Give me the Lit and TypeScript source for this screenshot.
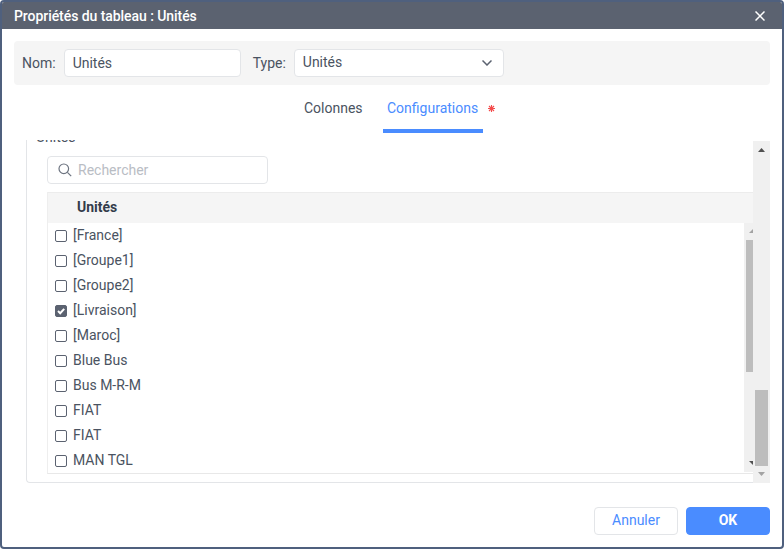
import { LitElement, html, css } from "lit";
import { customElement } from "lit/decorators.js";

const rows: { name: string; checked?: boolean }[] = [
  { name: "[France]" },
  { name: "[Groupe1]" },
  { name: "[Groupe2]" },
  { name: "[Livraison]", checked: true },
  { name: "[Maroc]" },
  { name: "Blue Bus" },
  { name: "Bus M-R-M" },
  { name: "FIAT" },
  { name: "FIAT" },
  { name: "MAN TGL" },
];

@customElement("app-root")
export class AppRoot extends LitElement {
  static styles = css`
    :host {
      display: block;
      width: 784px;
      height: 549px;
      font-family: Roboto, "Liberation Sans", sans-serif;
      font-size: 14px;
      color: #4a5361;
    }
    * { box-sizing: border-box; }
    .dialog {
      width: 784px;
      height: 549px;
      border: 2px solid #4f607e;
      border-radius: 4px;
      background: #fff;
      display: flex;
      flex-direction: column;
      overflow: hidden;
    }
    .title {
      height: 27px;
      flex: none;
      background: #5b6270;
      color: #fff;
      padding: 0 12px;
      display: flex;
      align-items: center;
      justify-content: space-between;
      font-weight: 500;
      letter-spacing: -0.06px;
    }
    .close { width: 10px; height: 10px; margin-right: 5px; margin-top: 1px; display: block; }
    .body {
      flex: 1;
      padding: 12px 12px 12px;
      display: flex;
      flex-direction: column;
      min-height: 0;
    }
    .band {
      height: 44px;
      flex: none;
      background: #f5f5f5;
      border-radius: 4px;
      padding: 8px;
      display: flex;
      align-items: center;
    }
    .band label { margin-right: 8px; }
    .band label.second { margin-left: 12px; }
    .field {
      height: 28px;
      background: #fff;
      border: 1px solid #e3e5e8;
      border-radius: 4px;
      padding: 0 8px;
      display: flex;
      align-items: center;
      color: #4a5361;
    }
    .name { width: 177px; }
    .type { width: 210px; justify-content: space-between; padding-bottom: 2px; }
    .chev { width: 10px; height: 6px; margin-right: 3px; margin-top: 2px; display: block; }
    .tabs {
      height: 48px;
      flex: none;
      display: flex;
      justify-content: center;
      margin-bottom: 8px;
    }
    .tab {
      height: 48px;
      padding: 0 4px 0;
      line-height: 46px;
      display: flex;
      align-items: flex-start;
    }
    .tab.first { margin-left: 282px; margin-right: 12px; padding: 0 0 0 8px; width: 75px; }
    .tab.active {
      width: 100px;
      color: #4a8cff;
      border-bottom: 4px solid #4a8cff;
    }
    .star { width: 7px; height: 7px; margin: 20px 0 0 10px; display: block; flex: none; }
    .spacer { flex: 1; }
    .pane {
      height: 342px;
      flex: none;
      display: flex;
    }
    .view {
      flex: 1;
      min-width: 0;
      overflow: hidden;
      padding-left: 12px;
      margin-top: -1px;
      height: 343px;
    }
    .fieldset {
      height: 354px;
      margin-top: -11px;
      margin-right: -20px;
      border: 1px solid #e3e5e8;
      border-right: none;
      border-top: none;
      border-bottom-left-radius: 4px;
      padding: 0 0 0 20px;
    }
    .legend {
      height: 16px;
      line-height: 16px;
      margin-left: -11px;
      color: #4a5361;
    }
    .search {
      width: 221px;
      height: 28px;
      margin-top: 11px;
      border: 1px solid #e3e5e8;
      border-radius: 4px;
      display: flex;
      align-items: center;
      padding-left: 10px;
      color: #b9bdc4;
    }
    .search svg { width: 14px; height: 14px; margin-right: 6px; display: block; }
    .table {
      margin-top: 8px;
      margin-right: 20px;
      height: 282px;
      border-left: 1px solid #eeeeee;
      border-bottom: 1px solid #e8e8e8;
      display: flex;
      flex-direction: column;
    }
    .head {
      height: 31px;
      flex: none;
      background: #f5f5f5;
      border-top: 1px solid #ececec;
      padding-left: 29px;
      line-height: 29px;
      font-weight: 700;
      color: #333c4b;
    }
    .list { flex: 1; display: flex; min-height: 0; }
    .rows { flex: 1; min-width: 0; }
    .row {
      height: 25px;
      display: flex;
      align-items: center;
      padding-left: 7px;
      padding-bottom: 1px;
    }
    .box {
      width: 12px;
      height: 12px;
      border: 1px solid #5b6270;
      border-radius: 2px;
      margin-right: 6px;
      margin-top: 2px;
      flex: none;
      display: block;
      background: #fff;
    }
    .box.on { background: #5b6270; }
    .box svg { display: block; width: 10px; height: 10px; }
    .inner-bar {
      width: 9px;
      height: 249px;
      flex: none;
      background: #f0f0f0;
      display: flex;
      flex-direction: column;
      align-items: flex-end;
      padding-top: 6px;
    }
    .inner-bar svg { width: 4px; height: 4px; display: block; }
    .inner-thumb {
      width: 7px;
      height: 132px;
      margin: 7px 0 89px;
      background: #bdbdbd;
    }
    .outer-bar {
      width: 17px;
      flex: none;
      background: #f0f0f0;
      display: flex;
      flex-direction: column;
      align-items: center;
      padding-top: 7px;
    }
    .outer-bar svg { width: 7px; height: 4px; display: block; }
    .outer-thumb {
      width: 13px;
      height: 76px;
      margin: 238px 0 6px;
      background: #bdbdbd;
    }
    .footer {
      flex: none;
      margin-top: 24px;
      display: flex;
      justify-content: flex-end;
      gap: 8px;
    }
    .btn {
      width: 84px;
      height: 28px;
      border-radius: 4px;
      border: 1px solid #e3e5e8;
      background: #fff;
      color: #4a8cff;
      font: inherit;
      padding: 0 0 2px;
    }
    .btn.ok {
      background: #4a8cff;
      border-color: #4a8cff;
      color: #fff;
      font-weight: 700;
    }
  `;

  render() {
    return html`
      <div class="dialog">
        <div class="title">
          <span>Propriétés du tableau : Unités</span>
          <svg class="close" viewBox="0 0 10 10" fill="none" stroke="#fff" stroke-width="1.5">
            <path d="M0.5 0.5 9.5 9.5M9.5 0.5 0.5 9.5" />
          </svg>
        </div>
        <div class="body">
          <div class="band">
            <label>Nom:</label>
            <div class="field name">Unités</div>
            <label class="second">Type:</label>
            <div class="field type">
              <span>Unités</span>
              <svg class="chev" viewBox="0 0 10 6" fill="none" stroke="#5b6270" stroke-width="1.5">
                <path d="M0.5 0.5 5 5 9.5 0.5" />
              </svg>
            </div>
          </div>
          <div class="tabs">
            <div class="tab first">Colonnes</div>
            <div class="tab active">
              Configurations
              <svg class="star" viewBox="0 0 7 7" fill="none" stroke="#f44c4c" stroke-width="1.1">
                <path d="M3.5 0V7M0 3.5H7M1 1 6 6M6 1 1 6" />
              </svg>
            </div>
            <div class="spacer"></div>
          </div>
          <div class="pane">
            <div class="view">
              <div class="fieldset">
                <div class="legend">Unités</div>
                <div class="search">
                  <svg viewBox="0 0 14 14" fill="none" stroke="#6d7480" stroke-width="1.2">
                    <circle cx="5.8" cy="5.8" r="4.8" />
                    <path d="M9.4 9.4 13.2 13.2" />
                  </svg>
                  Rechercher
                </div>
                <div class="table">
                  <div class="head">Unités</div>
                  <div class="list">
                    <div class="rows">
                      ${rows.map(
                        (r) => html`
                          <div class="row">
                            ${r.checked
                              ? html`<span class="box on">
                                  <svg viewBox="0 0 10 10" fill="none" stroke="#fff" stroke-width="2">
                                    <path d="M2 5 4.2 7.2 8.2 2.8" />
                                  </svg>
                                </span>`
                              : html`<span class="box"></span>`}
                            ${r.name}
                          </div>
                        `
                      )}
                    </div>
                    <div class="inner-bar">
                      <svg viewBox="0 0 4 4" fill="#a3a3a3"><path d="M4 0V4H0Z" /></svg>
                      <div class="inner-thumb"></div>
                      <svg viewBox="0 0 4 4" fill="#505050"><path d="M0 0H4V4Z" /></svg>
                    </div>
                  </div>
                </div>
              </div>
            </div>
            <div class="outer-bar">
              <svg viewBox="0 0 7 4" fill="#505050"><path d="M3.5 0 7 4H0Z" /></svg>
              <div class="outer-thumb"></div>
              <svg viewBox="0 0 7 4" fill="#a3a3a3"><path d="M0 0H7L3.5 4Z" /></svg>
            </div>
          </div>
          <div class="footer">
            <button class="btn">Annuler</button>
            <button class="btn ok">OK</button>
          </div>
        </div>
      </div>
    `;
  }
}
